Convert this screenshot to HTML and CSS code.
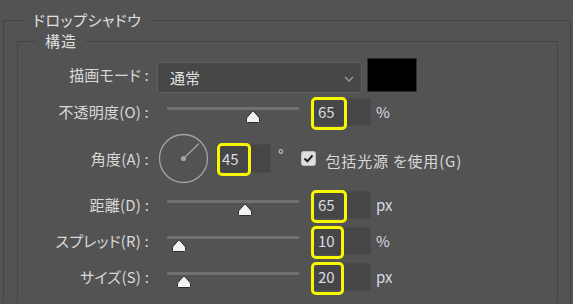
FILE: index.html
```html
<!DOCTYPE html>
<html lang="ja">
<head>
<meta charset="utf-8">
<link rel="stylesheet" href="styles.css">
</head>
<body>
<fieldset class="group outer">
  <legend class="group-title">ドロップシャドウ</legend>
  <fieldset class="group inner">
    <legend class="group-title sub">構造</legend>

    <div class="row row-mode">
      <span class="label">描画モード :</span>
      <div class="select">
        <span>通常</span>
        <svg class="chevron" width="10" height="6" viewBox="0 0 10 6"><path d="M1 1 L5 5 L9 1" fill="none" stroke="#9c9c9c" stroke-width="1.3"/></svg>
      </div>
      <div class="swatch"></div>
    </div>

    <div class="row">
      <span class="label">不透明度(O) :</span>
      <div class="slider">
        <div class="track"></div>
        <svg class="thumb" style="left:65%" width="16" height="14" viewBox="0 0 16 14"><path d="M8 1.5 Q8.8 1.5 9.5 2.3 L14 7.5 Q14.5 8 14.5 9 V11.5 Q14.5 12.5 13.5 12.5 H2.5 Q1.5 12.5 1.5 11.5 V9 Q1.5 8 2 7.5 L6.5 2.3 Q7.2 1.5 8 1.5 Z" fill="#f2f2f2" stroke="#2c2c2c" stroke-width="1"/></svg>
      </div>
      <div class="num"><span class="val">65</span><span class="mark"></span></div>
      <span class="unit">%</span>
    </div>

    <div class="row row-angle">
      <span class="label">角度(A) :</span>
      <svg class="dial" width="51" height="51" viewBox="0 0 51 51">
        <circle cx="25.5" cy="25.5" r="24" fill="none" stroke="#a3a3a3" stroke-width="1.3"/>
        <line x1="25.5" y1="25.5" x2="41" y2="10.5" stroke="#a3a3a3" stroke-width="1.3"/>
        <circle cx="25.5" cy="25.5" r="2.6" fill="#a3a3a3"/>
      </svg>
      <div class="num num-angle"><span class="val">45</span><span class="mark"></span></div>
      <span class="deg">°</span>
      <svg class="check" width="15" height="15" viewBox="0 0 15 15">
        <rect x="0.5" y="0.5" width="14" height="14" rx="2" fill="#dedede" stroke="#bdbdbd"/>
        <path d="M3.5 7.5 L6.3 10.3 L11.5 4.5" fill="none" stroke="#1e1e1e" stroke-width="2"/>
      </svg>
      <span class="check-text">包括光源 を使用(G)</span>
    </div>

    <div class="row">
      <span class="label">距離(D) :</span>
      <div class="slider">
        <div class="track"></div>
        <svg class="thumb" style="left:59%" width="16" height="14" viewBox="0 0 16 14"><path d="M8 1.5 Q8.8 1.5 9.5 2.3 L14 7.5 Q14.5 8 14.5 9 V11.5 Q14.5 12.5 13.5 12.5 H2.5 Q1.5 12.5 1.5 11.5 V9 Q1.5 8 2 7.5 L6.5 2.3 Q7.2 1.5 8 1.5 Z" fill="#f2f2f2" stroke="#2c2c2c" stroke-width="1"/></svg>
      </div>
      <div class="num"><span class="val">65</span><span class="mark"></span></div>
      <span class="unit">px</span>
    </div>

    <div class="row">
      <span class="label">スプレッド(R) :</span>
      <div class="slider">
        <div class="track"></div>
        <svg class="thumb" style="left:9%" width="16" height="14" viewBox="0 0 16 14"><path d="M8 1.5 Q8.8 1.5 9.5 2.3 L14 7.5 Q14.5 8 14.5 9 V11.5 Q14.5 12.5 13.5 12.5 H2.5 Q1.5 12.5 1.5 11.5 V9 Q1.5 8 2 7.5 L6.5 2.3 Q7.2 1.5 8 1.5 Z" fill="#f2f2f2" stroke="#2c2c2c" stroke-width="1"/></svg>
      </div>
      <div class="num"><span class="val">10</span><span class="mark mark-narrow"></span></div>
      <span class="unit">%</span>
    </div>

    <div class="row">
      <span class="label">サイズ(S) :</span>
      <div class="slider">
        <div class="track"></div>
        <svg class="thumb" style="left:13%" width="16" height="14" viewBox="0 0 16 14"><path d="M8 1.5 Q8.8 1.5 9.5 2.3 L14 7.5 Q14.5 8 14.5 9 V11.5 Q14.5 12.5 13.5 12.5 H2.5 Q1.5 12.5 1.5 11.5 V9 Q1.5 8 2 7.5 L6.5 2.3 Q7.2 1.5 8 1.5 Z" fill="#f2f2f2" stroke="#2c2c2c" stroke-width="1"/></svg>
      </div>
      <div class="num"><span class="val">20</span><span class="mark mark-narrow"></span></div>
      <span class="unit">px</span>
    </div>
  </fieldset>
</fieldset>
</body>
</html>
```
FILE: styles.css
```css
html, body {
  margin: 0;
  padding: 0;
}
body {
  background: #535353;
  height: 304px;
  overflow: hidden;
  font-family: "Noto Sans CJK JP", "Noto Sans", sans-serif;
  font-size: 15px;
  line-height: 18px;
  color: #d8d8d8;
  font-feature-settings: "palt" 1;
}
.group {
  border: 1px solid #454545;
  border-bottom: none;
  min-width: 0;
}
.outer {
  margin: 11px 2px 0 3px;
  padding: 3px 12px 0 13px;
}
.inner {
  margin: 0;
  padding: 6px 0 8px 0;
}
.group-title {
  margin-left: 6px;
  padding: 0 10px;
  font-size: 15px;
  line-height: 18px;
  color: #e0e0e0;
  letter-spacing: 0.6px;
}
.group-title.sub {
  margin-left: 19px;
  padding: 0 8px;
  letter-spacing: 1px;
}
.row {
  display: flex;
  align-items: center;
  height: 36px;
}
.row-mode {
  height: 38px;
  align-items: flex-start;
}
.row-mode .label {
  margin-top: 10px;
}
.row-angle {
  height: 57px;
}
.label {
  flex: none;
  width: 131px;
  text-align: right;
  white-space: nowrap;
  letter-spacing: 0.2px;
}
.select {
  flex: none;
  margin: 6px 0 0 8px;
  width: 205px;
  height: 31px;
  box-sizing: border-box;
  border: 1px solid #5f5f5f;
  border-radius: 3px;
  background: #474747;
  display: flex;
  align-items: center;
  justify-content: space-between;
  padding: 0 7px 0 12px;
  color: #e2e2e2;
}
.chevron {
  display: block;
  margin-top: 3px;
}
.swatch {
  flex: none;
  margin: 2px 0 0 5px;
  width: 50px;
  height: 34px;
  box-sizing: border-box;
  background: #000;
  border: 1px solid #2e2e2e;
}
.slider {
  flex: none;
  position: relative;
  width: 132px;
  height: 36px;
  margin-left: 18px;
  padding-top: 13px;
  box-sizing: border-box;
}
.track {
  height: 3px;
  background: #707070;
}
.thumb {
  position: absolute;
  top: 16px;
  transform: translateX(-50%);
  display: block;
}
.num {
  flex: none;
  position: relative;
  margin-left: 13px;
  width: 59px;
  height: 28px;
  box-sizing: border-box;
  background: #464646;
  border: 1px solid #4b4b4b;
  padding-left: 5px;
  line-height: 26px;
  color: #d6dce6;
}
.num-angle {
  margin-left: 7px;
  width: 55px;
  height: 29px;
  line-height: 27px;
}
.mark {
  position: absolute;
  left: -2px;
  top: -2px;
  width: 36px;
  height: 33px;
  box-sizing: border-box;
  border: 3px solid #f7f700;
  border-radius: 5px;
}
.num-angle .mark {
  left: 0;
  width: 34px;
}
.mark-narrow {
  width: 33px;
}
.unit {
  margin-left: 5px;
  color: #d6dce6;
}
.dial {
  flex: none;
  display: block;
  margin-left: 9px;
}
.deg {
  margin-left: 7px;
  margin-top: -8px;
}
.check {
  flex: none;
  display: block;
  margin-left: 17px;
}
.check-text {
  margin-left: 10px;
  margin-top: 4px;
  white-space: nowrap;
  letter-spacing: 0.8px;
}
```
